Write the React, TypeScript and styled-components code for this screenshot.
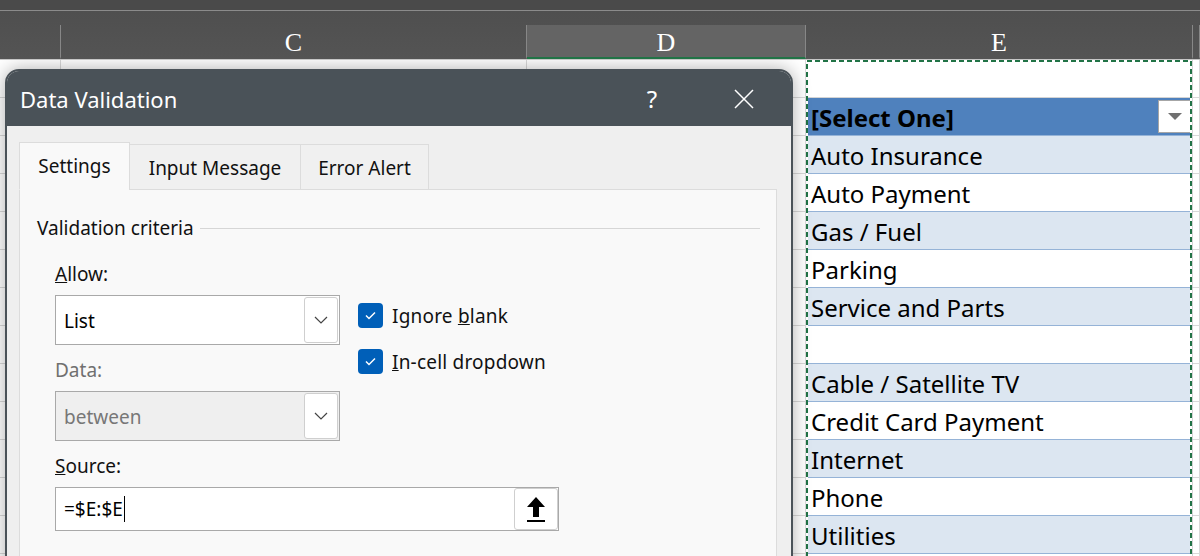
import styled, { createGlobalStyle } from 'styled-components';

const GlobalStyle = createGlobalStyle`
  html, body {
    margin: 0;
    padding: 0;
    background: #fff;
  }
  body {
    font-family: "Noto Sans", "DejaVu Sans", sans-serif;
  }
`;

const Page = styled.div`
  width: 1200px;
  height: 556px;
  overflow: hidden;
  display: flex;
  flex-direction: column;
  background: #fff;
`;

const TopBand = styled.div`
  flex: none;
  height: 10px;
  background: #4a4a4a;
  border-bottom: 1px solid #8b8b8b;
`;

const HeaderRow = styled.div`
  flex: none;
  display: flex;
  align-items: flex-end;
  height: 48px;
  background: linear-gradient(#4f4f4f, #545454);
  border-bottom: 1px solid #c6c6c6;
`;

const HeaderCell = styled.div<{ $w?: number; $selected?: boolean }>`
  ${p => (p.$w ? `width: ${p.$w}px; flex: none;` : 'flex: 1;')}
  height: 34px;
  box-sizing: border-box;
  padding-top: 3px;
  border-right: 1px solid #878787;
  border-bottom: 2px solid ${p => (p.$selected ? '#217346' : 'transparent')};
  background: ${p => (p.$selected ? '#646464' : 'transparent')};
  color: #fff;
  font-family: "Liberation Serif", "DejaVu Serif", serif;
  font-size: 26px;
  display: flex;
  align-items: center;
  justify-content: center;
`;

const Sheet = styled.div`
  position: relative;
  flex: 1;
  display: flex;
  overflow: hidden;
`;

const Column = styled.div<{ $w?: number }>`
  ${p => (p.$w ? `width: ${p.$w}px; flex: none;` : 'flex: 1;')}
  display: flex;
  flex-direction: column;
`;

const Cell = styled.div`
  flex: none;
  height: 38px;
  box-sizing: border-box;
  border-right: 1px solid #d9d9d9;
  border-bottom: 1px solid #d9d9d9;
`;

type Kind = 'blank' | 'head' | 'band' | 'plain';

const TableCell = styled.div<{ $kind: Kind }>`
  position: relative;
  flex: none;
  height: 38px;
  box-sizing: border-box;
  padding: 2px 0 0 5px;
  border-right: 1px solid #d4d4d4;
  border-bottom: 1px solid ${p => (p.$kind === 'blank' ? '#d4d4d4' : '#95b3d7')};
  background: ${p =>
    p.$kind === 'head' ? '#4f81bd' : p.$kind === 'band' ? '#dce6f1' : '#fff'};
  color: #000;
  font-size: 24px;
  font-weight: ${p => (p.$kind === 'head' ? 700 : 400)};
  line-height: 36px;
  white-space: nowrap;
`;

const CellDrop = styled.div`
  position: absolute;
  right: 1px;
  top: 2px;
  width: 33px;
  height: 33px;
  box-sizing: border-box;
  background: #fff;
  border: 1px solid #a6a6a6;
  display: flex;
  align-items: center;
  justify-content: center;

  &::after {
    content: '';
    border-left: 7px solid transparent;
    border-right: 7px solid transparent;
    border-top: 7px solid #707070;
  }
`;

const Marquee = styled.svg`
  position: absolute;
  left: 806px;
  top: 0;
  width: 386px;
  height: 520px;
  pointer-events: none;
`;

const Dialog = styled.div`
  position: absolute;
  left: 5px;
  top: 9px;
  width: 788px;
  height: 530px;
  box-sizing: border-box;
  border: 2px solid #4a5258;
  border-radius: 14px 14px 0 0;
  background: #efefef;
  box-shadow: 0 0 18px rgba(0, 0, 0, 0.32);
  display: flex;
  flex-direction: column;
  overflow: hidden;
`;

const TitleBar = styled.div`
  flex: none;
  height: 55px;
  background: #4a5258;
  color: #fff;
  display: flex;
  align-items: center;
  padding: 0 24px 0 13px;
`;

const TitleText = styled.div`
  flex: 1;
  font-size: 22px;
`;

const TitleButton = styled.div`
  width: 46px;
  height: 46px;
  display: flex;
  align-items: center;
  justify-content: center;
  font-size: 24px;
  & + & {
    margin-left: 46px;
  }
`;

const DialogBody = styled.div`
  flex: 1;
  display: flex;
  flex-direction: column;
  padding: 16px 14px 0 12px;
`;

const TabRow = styled.div`
  position: relative;
  z-index: 1;
  display: flex;
  align-items: flex-end;
  height: 48px;
  margin-bottom: -1px;
`;

const Tab = styled.div<{ $w: number; $active?: boolean }>`
  width: ${p => p.$w}px;
  height: ${p => (p.$active ? 48 : 46)}px;
  box-sizing: border-box;
  border: 1px solid #dcdcdc;
  border-bottom-color: ${p => (p.$active ? '#f9f9f9' : '#dcdcdc')};
  background: ${p => (p.$active ? '#f9f9f9' : '#f0f0f0')};
  color: #111;
  font-size: 19px;
  display: flex;
  align-items: center;
  justify-content: center;
  padding-top: ${p => (p.$active ? 0 : 2)}px;
  & + & {
    margin-left: -1px;
  }
`;

const Panel = styled.div`
  flex: 1;
  background: #f9f9f9;
  border: 1px solid #dcdcdc;
  padding: 25px 16px 0 17px;
`;

const Legend = styled.div`
  display: flex;
  align-items: center;
  height: 26px;
  font-size: 19px;
  color: #111;
`;

const Rule = styled.div`
  flex: 1;
  height: 1px;
  margin-left: 6px;
  background: #d6d6d6;
`;

const Criteria = styled.div`
  padding-left: 18px;
  margin-top: 20px;
`;

const Split = styled.div`
  display: flex;
  gap: 18px;
`;

const LeftCol = styled.div`
  width: 285px;
  display: flex;
  flex-direction: column;
`;

const RightCol = styled.div`
  display: flex;
  flex-direction: column;
  gap: 20px;
  padding-top: 41px;
`;

const Label = styled.div<{ $muted?: boolean; $gap?: number }>`
  height: 26px;
  line-height: 26px;
  font-size: 19px;
  color: ${p => (p.$muted ? '#707070' : '#111')};
  margin-top: ${p => p.$gap ?? 0}px;
  margin-bottom: 8px;
`;

const Select = styled.div<{ $disabled?: boolean }>`
  height: 50px;
  box-sizing: border-box;
  border: 1px solid #a9a9a9;
  background: ${p => (p.$disabled ? '#efefef' : '#fff')};
  color: ${p => (p.$disabled ? '#777' : '#000')};
  font-size: 19px;
  display: flex;
  align-items: center;
  padding: 0 1px 0 8px;
`;

const SelectText = styled.div`
  flex: 1;
  padding-top: 2px;
`;

const FieldButton = styled.div<{ $w: number; $h: number }>`
  width: ${p => p.$w}px;
  height: ${p => p.$h}px;
  box-sizing: border-box;
  background: #fff;
  border: 1px solid #cfcfcf;
  border-radius: 3px;
  display: flex;
  align-items: center;
  justify-content: center;
`;

const CheckRow = styled.div`
  display: flex;
  align-items: center;
  height: 26px;
  font-size: 19px;
  color: #111;
  white-space: nowrap;
`;

const CheckLabel = styled.span`
  padding-top: 2px;
  letter-spacing: 0.2px;
`;

const CheckBox = styled.div`
  width: 25px;
  height: 25px;
  border-radius: 4px;
  background: #005fb8;
  margin-right: 9px;
  display: flex;
  align-items: center;
  justify-content: center;
`;

const SourceField = styled.div`
  width: 504px;
  height: 44px;
  box-sizing: border-box;
  border: 1px solid #a9a9a9;
  background: #fff;
  display: flex;
  align-items: center;
  padding-left: 8px;
  font-size: 19px;
  color: #000;
`;

const SourceText = styled.div`
  flex: 1;
  display: flex;
  align-items: center;
`;

const Caret = styled.span`
  width: 1px;
  height: 26px;
  margin-left: 1px;
  background: #000;
`;

const rows: [Kind, string][] = [
  ['blank', ''],
  ['head', '[Select One]'],
  ['band', 'Auto Insurance'],
  ['plain', 'Auto Payment'],
  ['band', 'Gas / Fuel'],
  ['plain', 'Parking'],
  ['band', 'Service and Parts'],
  ['plain', ''],
  ['band', 'Cable / Satellite TV'],
  ['plain', 'Credit Card Payment'],
  ['band', 'Internet'],
  ['plain', 'Phone'],
  ['band', 'Utilities'],
  ['plain', ''],
];

const Chevron = () => (
  <svg width="14" height="8" viewBox="0 0 14 8">
    <polyline points="1,1 7,7 13,1" fill="none" stroke="#444" strokeWidth="1.2" />
  </svg>
);

const Check = () => (
  <svg width="25" height="25" viewBox="0 0 25 25">
    <polyline points="8,12.5 11,15.5 17,9.5" fill="none" stroke="#fff" strokeWidth="1.5" />
  </svg>
);

const plainColumn = (w?: number) => (
  <Column $w={w}>
    {rows.map((_, i) => (
      <Cell key={i} />
    ))}
  </Column>
);

const App = () => {
  return (
    <Page>
      <GlobalStyle />
      <TopBand />
      <HeaderRow>
        <HeaderCell $w={61} />
        <HeaderCell $w={466}>C</HeaderCell>
        <HeaderCell $w={279} $selected>D</HeaderCell>
        <HeaderCell $w={387}>E</HeaderCell>
        <HeaderCell />
      </HeaderRow>
      <Sheet>
        {plainColumn(61)}
        {plainColumn(466)}
        {plainColumn(279)}
        <Column $w={387}>
          {rows.map(([kind, text], i) => (
            <TableCell key={i} $kind={kind}>
              {text}
              {kind === 'head' && <CellDrop />}
            </TableCell>
          ))}
        </Column>
        {plainColumn()}

        <Marquee viewBox="0 0 386 520">
          <rect x="1" y="1" width="384" height="560" fill="none" stroke="#fff" strokeWidth="2" />
          <rect x="1" y="1" width="384" height="560" fill="none" stroke="#217346" strokeWidth="2" strokeDasharray="5 3" />
        </Marquee>

        <Dialog>
          <TitleBar>
            <TitleText>Data Validation</TitleText>
            <TitleButton>?</TitleButton>
            <TitleButton>
              <svg width="20" height="20" viewBox="0 0 20 20">
                <path d="M1 1 L19 19 M19 1 L1 19" stroke="#fff" strokeWidth="1.5" />
              </svg>
            </TitleButton>
          </TitleBar>
          <DialogBody>
            <TabRow>
              <Tab $w={111} $active>Settings</Tab>
              <Tab $w={172}>Input Message</Tab>
              <Tab $w={129}>Error Alert</Tab>
            </TabRow>
            <Panel>
              <Legend>
                Validation criteria
                <Rule />
              </Legend>
              <Criteria>
                <Split>
                  <LeftCol>
                    <Label>
                      <u>A</u>llow:
                    </Label>
                    <Select>
                      <SelectText>List</SelectText>
                      <FieldButton $w={34} $h={46}>
                        <Chevron />
                      </FieldButton>
                    </Select>
                    <Label $muted $gap={12}>
                      Data:
                    </Label>
                    <Select $disabled>
                      <SelectText>between</SelectText>
                      <FieldButton $w={34} $h={46}>
                        <Chevron />
                      </FieldButton>
                    </Select>
                  </LeftCol>
                  <RightCol>
                    <CheckRow>
                      <CheckBox>
                        <Check />
                      </CheckBox>
                      <CheckLabel>
                        Ignore <u>b</u>lank
                      </CheckLabel>
                    </CheckRow>
                    <CheckRow>
                      <CheckBox>
                        <Check />
                      </CheckBox>
                      <CheckLabel>
                        <u>I</u>n-cell dropdown
                      </CheckLabel>
                    </CheckRow>
                  </RightCol>
                </Split>
                <Label $gap={12}>
                  <u>S</u>ource:
                </Label>
                <SourceField>
                  <SourceText>
                    =$E:$E
                    <Caret />
                  </SourceText>
                  <FieldButton $w={44} $h={42}>
                    <svg width="22" height="28" viewBox="0 0 22 28">
                      <path d="M11 2 L20 12 H14 V22 H8 V12 H2 Z" fill="#000" />
                      <rect x="2" y="25" width="18" height="2" fill="#000" />
                    </svg>
                  </FieldButton>
                </SourceField>
              </Criteria>
            </Panel>
          </DialogBody>
        </Dialog>
      </Sheet>
    </Page>
  );
};

export default App;
